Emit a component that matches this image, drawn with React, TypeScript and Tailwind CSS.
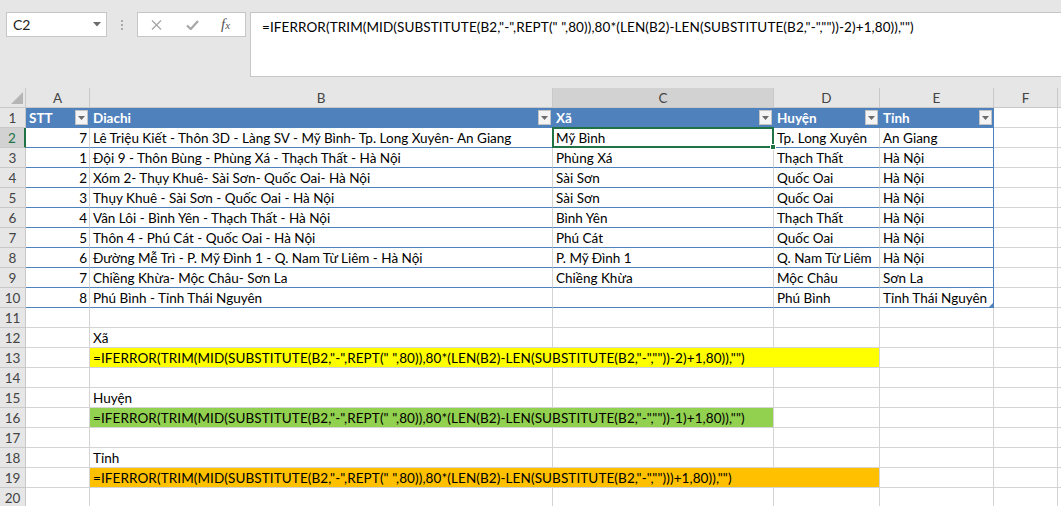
import { twMerge } from 'tailwind-merge'
import type { ReactNode } from 'react'

const GRID = 'grid grid-cols-[26px_64px_463px_221px_106px_114px_64px_1fr]'

const F_XA = '=IFERROR(TRIM(MID(SUBSTITUTE(B2,"-",REPT(" ",80)),80*(LEN(B2)-LEN(SUBSTITUTE(B2,"-",""))-2)+1,80)),"")'
const F_HUYEN = '=IFERROR(TRIM(MID(SUBSTITUTE(B2,"-",REPT(" ",80)),80*(LEN(B2)-LEN(SUBSTITUTE(B2,"-",""))-1)+1,80)),"")'
const F_TINH = '=IFERROR(TRIM(MID(SUBSTITUTE(B2,"-",REPT(" ",80)),80*(LEN(B2)-LEN(SUBSTITUTE(B2,"-","")))+1,80)),"")'

const rows: [number, string, string, string, string][] = [
  [7, 'Lê Triệu Kiết - Thôn 3D - Làng SV - Mỹ Bình- Tp. Long Xuyên- An Giang', 'Mỹ Bình', 'Tp. Long Xuyên', 'An Giang'],
  [1, 'Đội 9 - Thôn Bùng - Phùng Xá - Thạch Thất - Hà Nội', 'Phùng Xá', 'Thạch Thất', 'Hà Nội'],
  [2, 'Xóm 2- Thụy Khuê- Sài Sơn- Quốc Oai- Hà Nội', 'Sài Sơn', 'Quốc Oai', 'Hà Nội'],
  [3, 'Thụy Khuê - Sài Sơn - Quốc Oai - Hà Nội', 'Sài Sơn', 'Quốc Oai', 'Hà Nội'],
  [4, 'Vân Lôi - Bình Yên - Thạch Thất - Hà Nội', 'Bình Yên', 'Thạch Thất', 'Hà Nội'],
  [5, 'Thôn 4 - Phú Cát - Quốc Oai - Hà Nội', 'Phú Cát', 'Quốc Oai', 'Hà Nội'],
  [6, 'Đường Mễ Trì - P. Mỹ Đình 1 - Q. Nam Từ Liêm - Hà Nội', 'P. Mỹ Đình 1', 'Q. Nam Từ Liêm', 'Hà Nội'],
  [7, 'Chiềng Khừa- Mộc Châu- Sơn La', 'Chiềng Khừa', 'Mộc Châu', 'Sơn La'],
  [8, 'Phú Bình - Tỉnh Thái Nguyên', '', 'Phú Bình', 'Tỉnh Thái Nguyên'],
]

function Cell({ children, className }: { children?: ReactNode; className?: string }) {
  return (
    <div
      className={twMerge(
        'relative flex h-[20px] items-center whitespace-pre border-b border-r border-[#d4d4d4] px-[3px] pt-[2px] text-black',
        className,
      )}
    >
      {children}
    </div>
  )
}

function RowHead({ n, active }: { n: number; active?: boolean }) {
  return (
    <div
      className={twMerge(
        'flex h-[20px] items-center justify-center border-b border-r border-[#c8c8c8] bg-[#e6e6e6] pt-[1px] text-[#444]',
        active && 'border-r-2 border-r-[#217346] bg-[#d2d2d2] text-[#217346]',
      )}
    >
      {n}
    </div>
  )
}

function FilterBtn() {
  return (
    <span className="ml-auto mr-[-2px] mt-[-2px] flex h-[15px] w-[13px] items-center justify-center border border-[#c4c4c4] bg-[#f4f4f4]">
      <svg width="7" height="4" viewBox="0 0 7 4">
        <path d="M0 0h7L3.5 4z" fill="#6b6b6b" />
      </svg>
    </span>
  )
}

function TableHead({ label }: { label: string }) {
  return (
    <Cell className="border-[#4f81bd] bg-[#4f81bd] font-bold text-white">
      {label}
      <FilterBtn />
    </Cell>
  )
}

function EmptyRow({ n }: { n: number }) {
  return (
    <>
      <RowHead n={n} />
      <Cell />
      <Cell />
      <Cell />
      <Cell />
      <Cell />
      <Cell />
      <Cell className="border-r-0" />
    </>
  )
}

export default function App() {
  return (
    <div className="h-[506px] w-[1061px] overflow-hidden bg-white font-['Lato','Noto_Sans',sans-serif] text-[13.5px]">
      {/* formula bar */}
      <div className="flex h-[88px] items-start bg-[#e6e6e6] pl-[6px] pt-[12px]">
        <div className="flex h-[25px] w-[101px] items-center border border-[#c6c6c6] bg-white pl-[6px] pr-[5px] text-[14px] text-[#222]">
          C2
          <svg className="ml-auto" width="8" height="5" viewBox="0 0 8 5">
            <path d="M0 0h8L4 4.5z" fill="#6b6b6b" />
          </svg>
        </div>
        <div className="ml-[14px] mt-[8px] flex flex-col gap-[2px]">
          <span className="h-[2px] w-[2px] bg-[#a9a9a9]" />
          <span className="h-[2px] w-[2px] bg-[#a9a9a9]" />
          <span className="h-[2px] w-[2px] bg-[#a9a9a9]" />
        </div>
        <div className="ml-[14px] flex h-[25px] w-[109px] items-center border border-[#c6c6c6] bg-white">
          <svg className="ml-[13px]" width="11" height="10" viewBox="0 0 11 10">
            <path d="M1 0.5l9 9M10 0.5l-9 9" stroke="#a6a6a6" strokeWidth="1.3" />
          </svg>
          <svg className="ml-[24px]" width="13" height="10" viewBox="0 0 13 10">
            <path d="M1 5.5l3.8 3.5L12 1" stroke="#a6a6a6" strokeWidth="2.2" fill="none" />
          </svg>
          <span className="ml-[22px] font-['Liberation_Serif',serif] text-[15px] italic leading-none text-[#555]">
            f<span className="text-[11px]">x</span>
          </span>
        </div>
        <div className="ml-[4px] h-[65px] flex-1 whitespace-pre border border-r-0 border-[#c6c6c6] bg-white pl-[11px] pt-[4px] tracking-[0.1px] text-black">
          {F_XA}
        </div>
      </div>

      {/* sheet */}
      <div className={GRID}>
        {/* column letters */}
        <div className="flex h-[20px] items-end justify-end border-b border-r border-[#c8c8c8] bg-[#e6e6e6] pb-[3px] pr-[2px]">
          <svg width="12" height="12" viewBox="0 0 12 12">
            <path d="M12 0V12H0z" fill="#b5b5b5" />
          </svg>
        </div>
        {['A', 'B', 'C', 'D', 'E', 'F', ''].map((c) => (
          <div
            key={c}
            className={twMerge(
              'flex h-[20px] items-center justify-center border-b border-r border-[#c8c8c8] bg-[#e6e6e6] pt-[1px] text-[#444]',
              c === 'C' && 'bg-[#d2d2d2]',
              c === '' && 'border-r-0',
            )}
          >
            {c}
          </div>
        ))}

        {/* row 1: table header */}
        <RowHead n={1} />
        <TableHead label="STT" />
        <TableHead label="Diachi" />
        <TableHead label="Xã" />
        <TableHead label="Huyện" />
        <TableHead label="Tỉnh" />
        <Cell />
        <Cell className="border-r-0" />

        {/* rows 2-10 */}
        {rows.map(([stt, addr, xa, huyen, tinh], i) => (
          <>
            <RowHead key={`h${i}`} n={i + 2} active={i === 0} />
            <Cell key={`a${i}`} className="justify-end border-b-[#4f81bd] pr-[2px]">
              {stt}
            </Cell>
            <Cell key={`b${i}`} className="border-b-[#4f81bd]">
              {addr}
            </Cell>
            <Cell key={`c${i}`} className="border-b-[#4f81bd]">
              {xa}
              {i === 0 && (
                <span className="absolute -bottom-[1px] -left-[1px] -right-[1px] -top-[1px] z-10 border-2 border-[#217346]">
                  <span className="absolute -bottom-[4px] -right-[4px] h-[6px] w-[6px] border border-white bg-[#217346]" />
                </span>
              )}
            </Cell>
            <Cell key={`d${i}`} className="border-b-[#4f81bd]">
              {huyen}
            </Cell>
            <Cell key={`e${i}`} className="border-b-[#4f81bd] border-r-[#4f81bd]">
              {tinh}
              {i === 8 && (
                <svg className="absolute bottom-[0px] right-[0px]" width="4" height="4" viewBox="0 0 4 4">
                  <path d="M4 0V4H0z" fill="#4f81bd" />
                </svg>
              )}
            </Cell>
            <Cell key={`f${i}`} />
            <Cell key={`g${i}`} className="border-r-0" />
          </>
        ))}

        <EmptyRow n={11} />

        <RowHead n={12} />
        <Cell />
        <Cell>Xã</Cell>
        <Cell />
        <Cell />
        <Cell />
        <Cell />
        <Cell className="border-r-0" />

        <RowHead n={13} />
        <Cell />
        <Cell className="col-span-3 bg-[#ffff00] tracking-[0.1px]">{F_XA}</Cell>
        <Cell />
        <Cell />
        <Cell className="border-r-0" />

        <EmptyRow n={14} />

        <RowHead n={15} />
        <Cell />
        <Cell>Huyện</Cell>
        <Cell />
        <Cell />
        <Cell />
        <Cell />
        <Cell className="border-r-0" />

        <RowHead n={16} />
        <Cell />
        <Cell className="col-span-2 bg-[#92d050] tracking-[0.1px]">{F_HUYEN}</Cell>
        <Cell />
        <Cell />
        <Cell />
        <Cell className="border-r-0" />

        <EmptyRow n={17} />

        <RowHead n={18} />
        <Cell />
        <Cell>Tỉnh</Cell>
        <Cell />
        <Cell />
        <Cell />
        <Cell />
        <Cell className="border-r-0" />

        <RowHead n={19} />
        <Cell />
        <Cell className="col-span-3 bg-[#ffc000] tracking-[0.1px]">{F_TINH}</Cell>
        <Cell />
        <Cell />
        <Cell className="border-r-0" />

        <EmptyRow n={20} />
      </div>
    </div>
  )
}
